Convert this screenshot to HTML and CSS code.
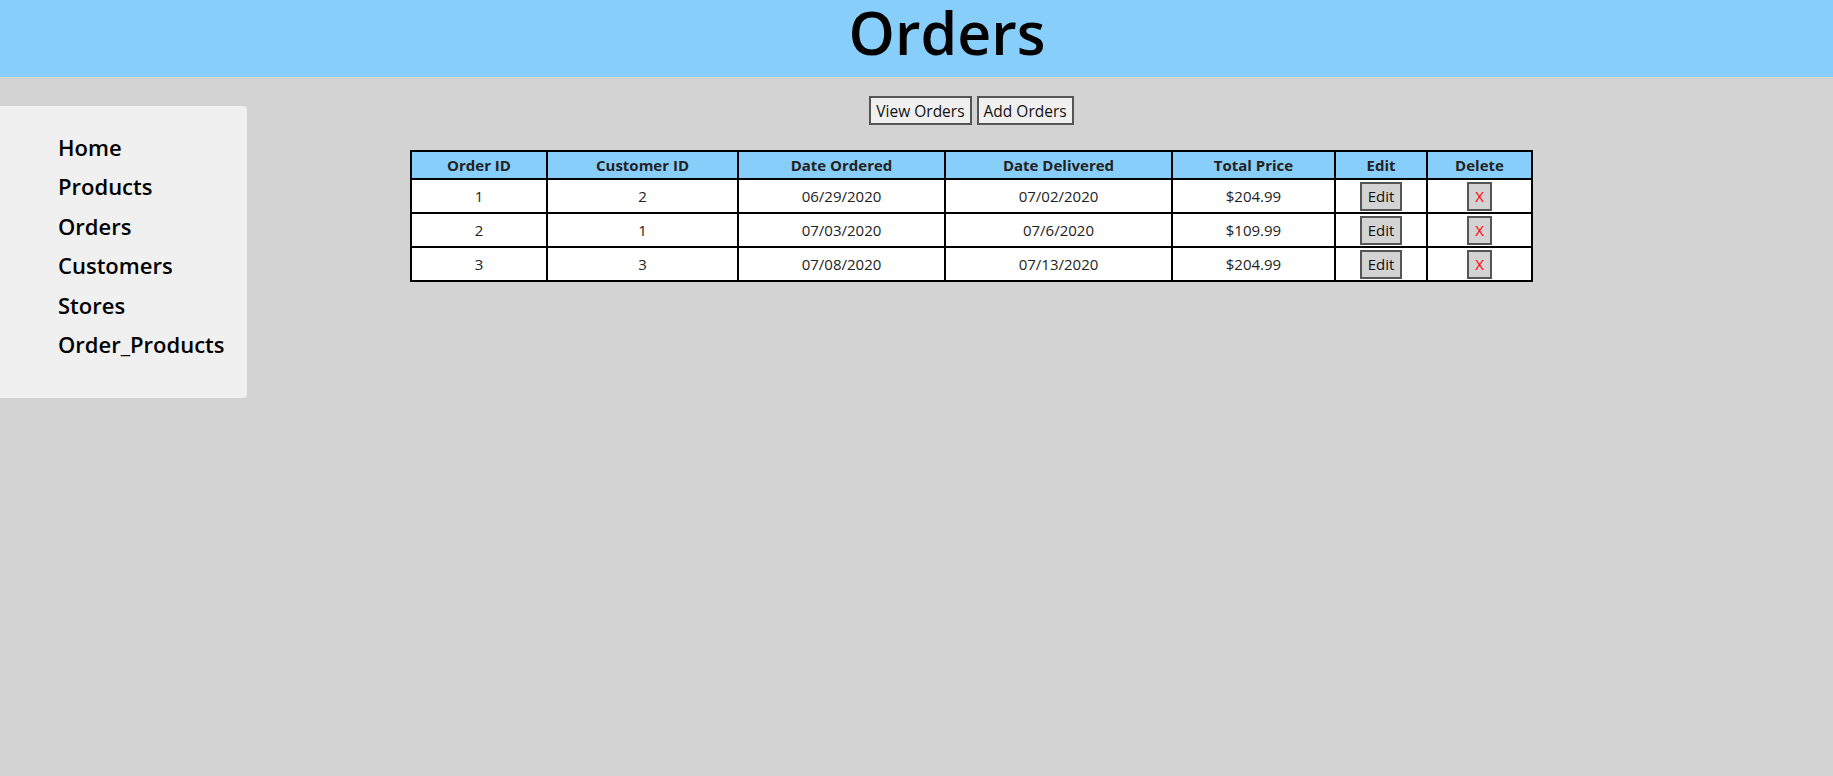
FILE: index.html
```html
<!DOCTYPE html>
<html>
<head>
<meta charset="utf-8">
<title>Orders</title>
<link rel="stylesheet" href="styles.css">
</head>
<body>
<header class="top">
  <h1 class="title">Orders</h1>
</header>
<div class="layout">
  <nav class="sidebar">
    <a class="nav-link" href="#">Home</a>
    <a class="nav-link" href="#">Products</a>
    <a class="nav-link" href="#">Orders</a>
    <a class="nav-link" href="#">Customers</a>
    <a class="nav-link" href="#">Stores</a>
    <a class="nav-link" href="#">Order_Products</a>
  </nav>
  <main class="content">
    <div class="actions">
      <button class="btn">View Orders</button>
      <button class="btn">Add Orders</button>
    </div>
    <table class="orders">
      <colgroup>
        <col class="c1"><col class="c2"><col class="c3"><col class="c4"><col class="c5"><col class="c6"><col class="c7">
      </colgroup>
      <thead>
        <tr><th>Order ID</th><th>Customer ID</th><th>Date Ordered</th><th>Date Delivered</th><th>Total Price</th><th>Edit</th><th>Delete</th></tr>
      </thead>
      <tbody>
        <tr><td>1</td><td>2</td><td>06/29/2020</td><td>07/02/2020</td><td>$204.99</td><td><button class="cell-btn">Edit</button></td><td><button class="cell-btn del">X</button></td></tr>
        <tr><td>2</td><td>1</td><td>07/03/2020</td><td>07/6/2020</td><td>$109.99</td><td><button class="cell-btn">Edit</button></td><td><button class="cell-btn del">X</button></td></tr>
        <tr><td>3</td><td>3</td><td>07/08/2020</td><td>07/13/2020</td><td>$204.99</td><td><button class="cell-btn">Edit</button></td><td><button class="cell-btn del">X</button></td></tr>
      </tbody>
    </table>
  </main>
</div>
</body>
</html>
```
FILE: styles.css
```css
html, body {
  margin: 0;
  padding: 0;
}
body {
  background: #d3d3d3;
  font-family: "Open Sans", "Noto Sans", sans-serif;
  font-size: 16px;
  color: #000;
  min-height: 776px;
}
.top {
  background: #87cefa;
  height: 77px;
}
.title {
  margin: 0;
  padding-left: 61px;
  text-align: center;
  font-size: 59px;
  font-weight: 600;
  line-height: 64px;
  height: 77px;
}
.layout {
  display: flex;
  align-items: flex-start;
}
.sidebar {
  width: 189px;
  margin-top: 29px;
  padding: 22px 0 34px 58px;
  background: #f0f0f0;
  border-radius: 0 4px 4px 0;
  display: flex;
  flex-direction: column;
}
.nav-link {
  color: #000;
  text-decoration: none;
  font-size: 22px;
  font-weight: 600;
  line-height: 39.4px;
  height: 39.4px;
}
.content {
  flex: 1;
  padding-top: 19px;
  padding-right: 137px;
  display: flex;
  flex-direction: column;
  align-items: center;
}
.actions {
  display: flex;
  gap: 5px;
}
.btn {
  font-family: inherit;
  font-size: 15.5px;
  height: 29px;
  padding: 0 5px;
  background: #f0f0f0;
  border: 2px solid #555;
  color: #111;
}
.orders {
  margin-top: 25px;
  border-collapse: collapse;
  table-layout: fixed;
  width: 1123px;
  border: 2px solid #000;
  font-size: 15px;
  color: #222;
}
.c1 { width: 136px; }
.c2 { width: 191px; }
.c3 { width: 207px; }
.c4 { width: 227px; }
.c5 { width: 163px; }
.c6 { width: 92px; }
.c7 { width: 105px; }
.orders th {
  background: #87cefa;
  border: 2px solid #000;
  height: 26px;
  padding: 0;
  font-weight: 700;
  text-align: center;
}
.orders td {
  background: #fff;
  border: 2px solid #000;
  height: 30px;
  padding: 1px 0;
  text-align: center;
}
.cell-btn {
  font-family: inherit;
  font-size: 15px;
  height: 29px;
  padding: 0 6px;
  background: #d3d3d3;
  border: 2px solid #555;
  color: #111;
  vertical-align: middle;
}
.cell-btn.del {
  color: #ff0000;
  padding: 0 6px;
}
```
